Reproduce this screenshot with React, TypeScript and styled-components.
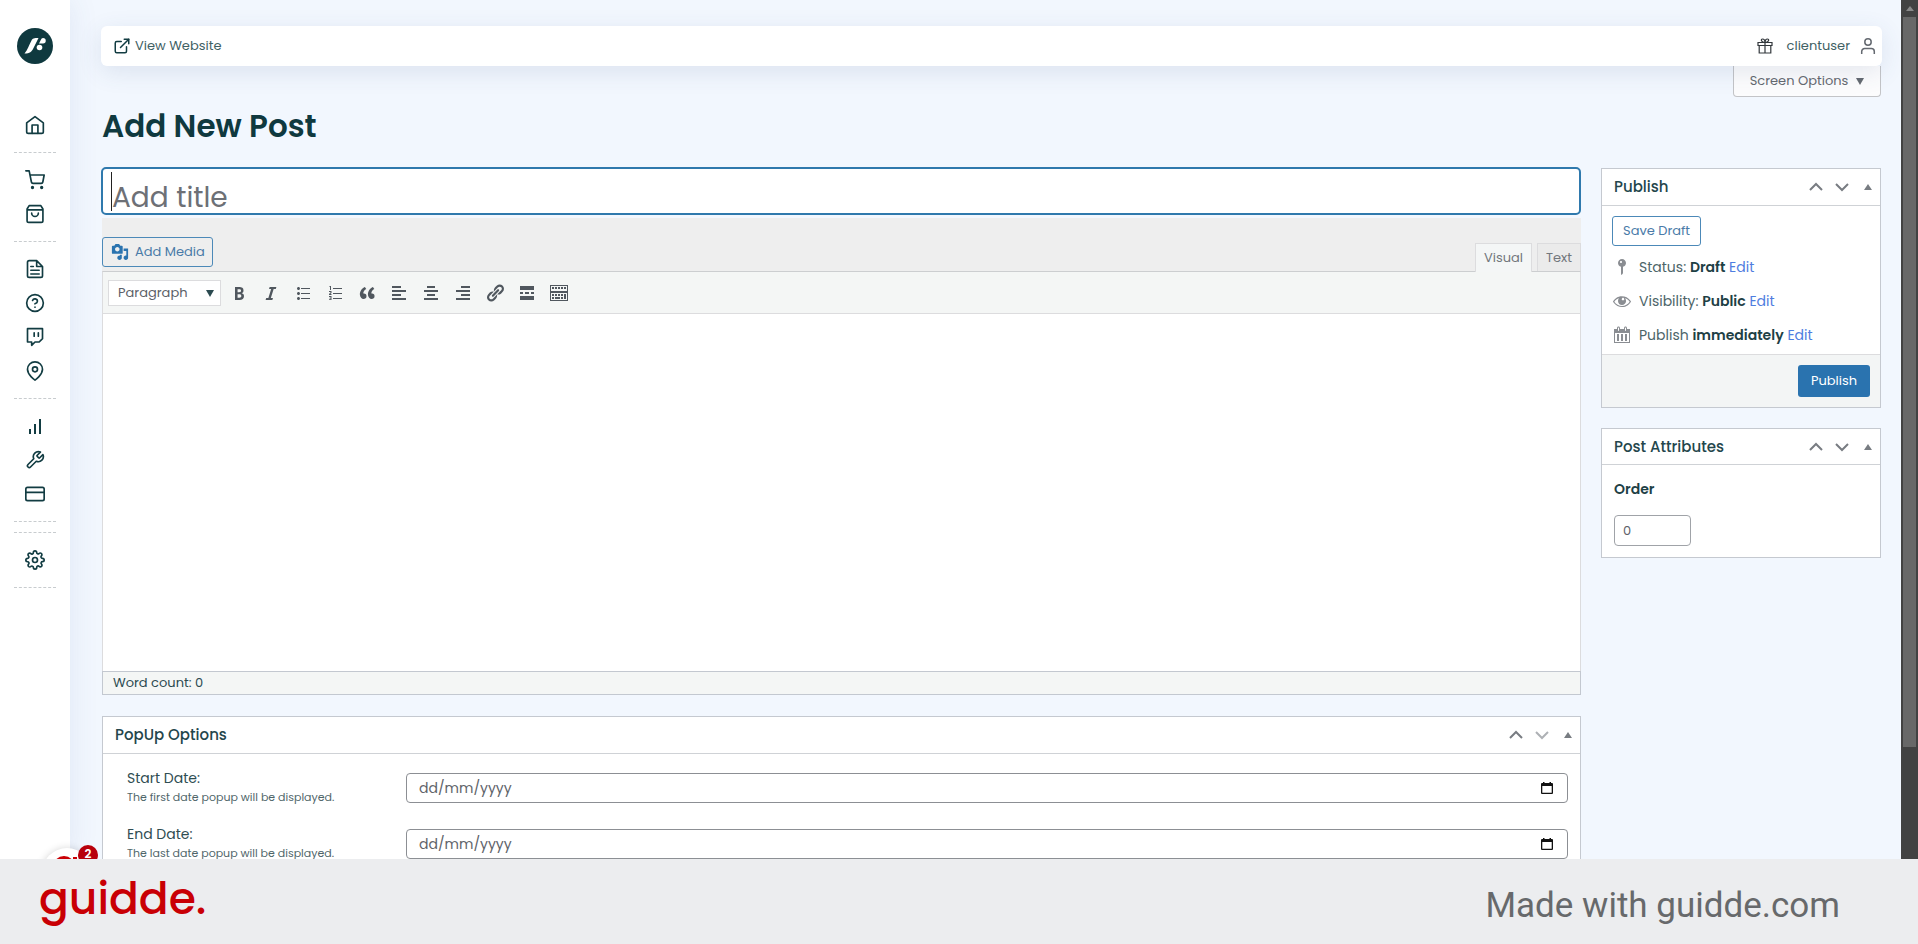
import React from 'react';
import styled, { createGlobalStyle } from 'styled-components';
import {
  FiExternalLink, FiShoppingCart, FiHelpCircle, FiTwitch, FiMapPin, FiCreditCard, FiSettings,
} from 'react-icons/fi';
import { LuWrench } from 'react-icons/lu';

const Global = createGlobalStyle`
  * { box-sizing: border-box; }
  html, body, #root { height: 100%; }
  body {
    margin: 0;
    background: #f2f7fe;
    color: #2b4a50;
    font-family: Poppins, Inter, "Liberation Sans", sans-serif;
    font-size: 13px;
    overflow: hidden;
  }
  button, input, select, textarea { font: inherit; color: inherit; }
  a { text-decoration: none; }
`;

const Shell = styled.div`
  height: 100vh;
  display: flex;
  flex-direction: column;
`;

const Screen = styled.div`
  flex: 1;
  min-height: 0;
  display: flex;
  position: relative;
  overflow: hidden;
`;

const Sidebar = styled.nav`
  flex: none;
  width: 70px;
  background: #fff;
  box-shadow: 0 0 30px rgba(60, 90, 160, 0.1);
  display: flex;
  flex-direction: column;
  align-items: center;
  padding-top: 28px;
  z-index: 1;
`;

const LogoLink = styled.a`
  height: 36px;
  margin-bottom: 34px;
`;

const NavGroup = styled.div<{ $empty?: boolean }>`
  width: 42px;
  display: flex;
  flex-direction: column;
  align-items: center;
  padding: ${(p) => (p.$empty ? '10px 0 0' : '10px 0')};
  border-bottom: 1px dashed #c8cccf;
`;

const NavLink = styled.a`
  height: 34px;
  display: flex;
  align-items: center;
  color: #123c42;
`;

const Main = styled.main`
  flex: 1;
  min-width: 0;
  padding: 26px 19px 0 31px;
`;

const TopBar = styled.header`
  position: relative;
  z-index: 1;
  height: 40px;
  background: #fff;
  border-radius: 6px;
  box-shadow: 0 6px 24px rgba(60, 80, 130, 0.12);
  display: flex;
  align-items: center;
  justify-content: space-between;
  padding: 0 6px 0 12px;
`;

const TopLink = styled.a`
  color: #3f6164;
  display: flex;
  align-items: center;
  gap: 4px;
`;

const UserArea = styled.div`
  display: flex;
  align-items: center;
  gap: 14px;
`;

const UserLink = styled(TopLink)`
  gap: 10px;
`;

const ScreenMeta = styled.div`
  display: flex;
  justify-content: flex-end;
  padding-right: 1px;
  height: 31px;
`;

const ScreenOptions = styled.button`
  width: 148px;
  background: #fcfcfd;
  border: 1px solid #c3c4c7;
  border-top: 0;
  border-radius: 0 0 4px 4px;
  color: #646970;
  display: flex;
  align-items: center;
  justify-content: center;
  gap: 8px;
  padding: 0;
`;

const PageTitle = styled.h1`
  margin: 8px 0 0 1px;
  font-size: 31px;
  line-height: 42px;
  font-weight: 600;
  color: #0f393f;
`;

const Columns = styled.div`
  display: grid;
  grid-template-columns: minmax(0, 1fr) 280px;
  gap: 20px;
  align-items: start;
  padding-right: 1px;
  margin-top: 20px;
`;

const TitleWrap = styled.div`
  position: relative;
`;

const Caret = styled.span`
  position: absolute;
  left: 10px;
  top: 5px;
  width: 1px;
  height: 39px;
  background: #222;
`;

const TitleInput = styled.input`
  display: block;
  width: 100%;
  height: 48px;
  background: #fff;
  border: 2px solid #2f79ad;
  border-radius: 5px;
  padding: 14px 9px 0;
  font-size: 28px;
  line-height: 28px;
  outline: none;
  caret-color: transparent;
  &::placeholder { color: #6d7076; opacity: 1; }
`;

const Editor = styled.section`
  margin: 3px 0 0 1px;
`;

const EditorTools = styled.div`
  height: 53px;
  background: #eee;
  display: flex;
  justify-content: space-between;
  align-items: flex-end;
`;

const OutlineButton = styled.button`
  height: 30px;
  padding: 0 10px;
  background: transparent;
  border: 1px solid #4c89b8;
  border-radius: 3px;
  color: #4a7ba8;
  display: flex;
  align-items: center;
  gap: 6px;
`;

const MediaButton = styled(OutlineButton)`
  padding: 0 7px 0 8px;
  margin-bottom: 4px;
`;

const Tabs = styled.div`
  display: flex;
  align-items: flex-end;
  gap: 5px;
`;

const Tab = styled.button<{ $active?: boolean }>`
  height: ${(p) => (p.$active ? 29 : 28)}px;
  width: ${(p) => (p.$active ? 57 : 44)}px;
  margin-bottom: ${(p) => (p.$active ? -1 : 0)}px;
  padding: 0;
  border: 1px solid #dcdcde;
  border-bottom: 0;
  background: ${(p) => (p.$active ? '#f4f6f6' : '#ebebeb')};
  color: #72777c;
`;

const EditorFrame = styled.div`
  border: 1px solid #dcdcde;
  border-top-color: #ccced0;
  border-bottom: 0;
`;

const Toolbar = styled.div`
  height: 42px;
  background: #f4f6f5;
  border-bottom: 1px solid #dcdcde;
  display: flex;
  align-items: center;
  padding: 0 5px;
`;

const FormatWrap = styled.div`
  position: relative;
  width: 113px;
  margin-right: 2px;
  & > svg { position: absolute; right: 7px; top: 9px; pointer-events: none; }
`;

const FormatSelect = styled.select`
  display: block;
  appearance: none;
  width: 100%;
  height: 26px;
  background: #fff;
  border: 1px solid #dcdcde;
  border-radius: 0;
  padding: 0 9px;
  color: #5c6168;
`;

const ToolButton = styled.button`
  width: 32px;
  height: 30px;
  padding: 0;
  border: 0;
  background: none;
  color: #50575e;
  display: flex;
  align-items: center;
  justify-content: center;
`;

const Writing = styled.textarea`
  display: block;
  width: 100%;
  height: 357px;
  border: 0;
  resize: none;
  outline: none;
  background: #fff;
`;

const StatusBar = styled.div`
  height: 24px;
  border: 1px solid #c3c8d0;
  background: #f4f6f5;
  padding: 0 10px;
  line-height: 22px;
`;

const Panel = styled.section`
  background: #fff;
  border: 1px solid #c5c9d0;
`;

const PopupPanel = styled(Panel)`
  margin: 21px 0 0 1px;
`;

const PanelHead = styled.header<{ $tall?: boolean }>`
  height: ${(p) => (p.$tall ? 37 : 36)}px;
  border-bottom: 1px solid #cfd2d6;
  display: flex;
  align-items: center;
  justify-content: space-between;
  padding: 0 4px 0 12px;
`;

const PanelTitle = styled.h2`
  margin: 0;
  font-size: 15px;
  line-height: 20px;
  font-weight: 500;
  color: #24464c;
`;

const PanelActions = styled.div`
  display: flex;
`;

const PanelAction = styled.button<{ $dim?: boolean }>`
  width: 26px;
  height: 30px;
  padding: 0;
  border: 0;
  background: none;
  color: ${(p) => (p.$dim ? '#aeb1b5' : '#787c82')};
  display: flex;
  align-items: center;
  justify-content: center;
  &:last-child { width: 16px; margin-left: 5px; }
`;

const FieldList = styled.div`
  padding-top: 15px;
`;

const FieldRow = styled.div`
  display: grid;
  grid-template-columns: 279px minmax(0, 1fr);
  height: 56px;
  padding: 0 12px 0 24px;
`;

const FieldText = styled.label`
  display: flex;
  flex-direction: column;
  line-height: 19px;
  color: #2f4d52;
  font-size: 14px;
  small { font-size: 11px; line-height: 18px; color: #50666a; }
`;

const DateBox = styled.div`
  position: relative;
  height: 30px;
  margin-top: 4px;
  & > svg { position: absolute; right: 15px; top: 9px; pointer-events: none; }
`;

const DateInput = styled.input`
  display: block;
  width: 100%;
  height: 30px;
  border: 1px solid #8c8f94;
  border-radius: 4px;
  padding: 0 12px;
  font-size: 14px;
  background: #fff;
  &::placeholder { color: #5f646a; opacity: 1; }
`;

const SideColumn = styled.aside`
  padding-top: 1px;
  display: grid;
  gap: 20px;
`;

const PublishBody = styled.div`
  padding: 10px;
  height: 148px;
`;

const InfoList = styled.div`
  padding-top: 4px;
`;

const InfoRow = styled.div`
  height: 34px;
  display: flex;
  align-items: center;
  gap: 7px;
  color: #4d6569;
  font-size: 14px;
  & > svg { flex: none; }
  b { font-weight: 600; color: #1e4045; }
  a { color: #4f7de0; }
`;

const PublishFoot = styled.footer`
  height: 53px;
  background: #f3f5f5;
  border-top: 1px solid #dcdcde;
  display: flex;
  justify-content: flex-end;
  align-items: center;
  padding-right: 10px;
`;

const PrimaryButton = styled.button`
  width: 72px;
  height: 32px;
  padding: 0;
  border: 0;
  border-radius: 3px;
  background: #2a73af;
  color: #fff;
`;

const OrderBody = styled.div`
  padding: 11px 12px;
  display: flex;
  flex-direction: column;
`;

const OrderLabel = styled.label`
  font-size: 14px;
  font-weight: 600;
  line-height: 26px;
  color: #1e4045;
`;

const OrderInput = styled.input`
  margin-top: 13px;
  width: 77px;
  height: 31px;
  border: 1px solid #a0a3a8;
  border-radius: 4px;
  padding: 0 8px;
  color: #5c6168;
`;

const ScrollRail = styled.div`
  flex: none;
  width: 17px;
  background: #424242;
  display: flex;
  flex-direction: column;
  padding: 0 2px;
`;

const RailArrow = styled.div`
  height: 17px;
  display: flex;
  align-items: center;
  justify-content: center;
`;

const RailThumb = styled.div`
  height: 85%;
  background: #686868;
`;

const HelpBubble = styled.div`
  position: absolute;
  left: 42px;
  top: 848px;
  width: 50px;
  height: 50px;
  border-radius: 50%;
  background: #fff;
  box-shadow: 0 1px 8px rgba(0, 0, 0, 0.2);
  z-index: 2;
  & > svg { position: absolute; left: 9px; top: 7px; }
`;

const BubbleBadge = styled.span`
  position: absolute;
  left: 36px;
  top: -3px;
  width: 20px;
  height: 20px;
  border-radius: 50%;
  background: #b8000c;
  color: #fff;
  font-size: 12px;
  font-weight: 600;
  line-height: 18px;
  text-align: center;
`;

const Footer = styled.footer`
  flex: none;
  height: 85px;
  background: #ecedef;
  display: flex;
  justify-content: space-between;
  align-items: center;
  padding: 0 78px 0 39px;
  position: relative;
  z-index: 3;
`;

const Brand = styled.span`
  font-size: 44px;
  line-height: 48px;
  font-weight: 500;
  color: #c90005;
  margin-bottom: 6px;
`;

const MadeWith = styled.span`
  font-family: Roboto, sans-serif;
  font-size: 35px;
  line-height: 42px;
  color: #67696b;
  margin-top: 9px;
`;

const stroke = { fill: 'none', stroke: 'currentColor', strokeWidth: 2, strokeLinecap: 'round', strokeLinejoin: 'round' } as const;

const Logo = () => (
  <svg width="36" height="36" viewBox="0 0 36 36" aria-hidden="true">
    <circle cx="18" cy="18" r="18" fill="#0f393f" />
    <path d="M7.500 25.500C10.500 22 12 17 14.500 12.500C15.500 10.500 17 10 21.500 10L16.500 20C14.500 24 13 25.500 7.500 25.500Z" fill="#fff" />
    <path d="M22 15.500L23.500 12.500C24.300 10.800 25 10 26 10A2.700 2.700 0 0 1 26 15.500Z" fill="#fff" />
    <circle cx="22.500" cy="19.500" r="2.800" fill="#fff" />
  </svg>
);

const HomeIcon = () => (
  <svg width="20" height="20" viewBox="0 0 24 24" {...stroke}>
    <path d="M2 9.500 12 2l10 7.500V20a2 2 0 0 1-2 2H4a2 2 0 0 1-2-2z" />
    <path d="M8.500 22v-10h7v10" />
  </svg>
);

const BagIcon = () => (
  <svg width="20" height="20" viewBox="0 0 24 24" {...stroke}>
    <path d="M5 2 2.500 6v14a2 2 0 0 0 2 2h15a2 2 0 0 0 2-2V6L19 2zM2.500 7h19M16 11a4 4 0 0 1-8 0" />
  </svg>
);

const DocIcon = () => (
  <svg width="20" height="20" viewBox="0 0 24 24" {...stroke}>
    <path d="M14 2H5a2 2 0 0 0-2 2v16a2 2 0 0 0 2 2h14a2 2 0 0 0 2-2V9zM14 2v7h7M7 9h3M7 13.500h10M7 18h10" />
  </svg>
);

const BarsIcon = () => (
  <svg width="18" height="18" viewBox="0 0 18 18" {...stroke} strokeLinecap="butt">
    <path d="M4 17v-5M9 17V7M14 17V2" />
  </svg>
);

const GiftIcon = () => (
  <svg width="16" height="16" viewBox="0 0 16 16" fill="none" stroke="#33383c" strokeWidth="1.200">
    <path d="M1 4.500h14v3H1zM2.200 7.500h11.600v7.500H2.200zM8 4.500V15M8 4.500C4 4.500 3.500 1 5.500 1S8 3 8 4.500C8 3 8.500 1 10.500 1S12 4.500 8 4.500" />
  </svg>
);

const PersonIcon = () => (
  <svg width="16" height="18" viewBox="0 0 16 18" fill="none" stroke="#646970" strokeWidth="1.500">
    <circle cx="8" cy="5" r="3.200" />
    <path d="M1.700 17v-2.500a3 3 0 0 1 3-3h6.600a3 3 0 0 1 3 3V17" />
  </svg>
);

const Triangle = ({ up = false }: { up?: boolean }) => (
  <svg width="8" height="8" viewBox="0 0 8 8" fill="currentColor">
    <path d={up ? 'M4 1 8 7H0z' : 'M0 1h8L4 8z'} />
  </svg>
);

const MediaIcon = () => (
  <svg width="18" height="18" viewBox="0 0 20 20" fill="#2a73af">
    <path d="M13 11V4c0-.55-.45-1-1-1h-1.670L9 1H5L3.670 3H2c-.55 0-1 .45-1 1v7c0 .55.45 1 1 1h10c.55 0 1-.45 1-1zM7 4.500c1.380 0 2.500 1.120 2.500 2.500S8.380 9.500 7 9.500 4.500 8.380 4.500 7 5.620 4.500 7 4.500zM14 6h5v10.500c0 1.380-1.120 2.500-2.500 2.500S14 17.880 14 16.500s1.120-2.500 2.500-2.500c.17 0 .34.020.5.050V9h-3V6zm-4 8.050V13h2v3.500c0 1.380-1.120 2.500-2.500 2.500S7 17.880 7 16.500 8.120 14 9.500 14c.17 0 .34.020.5.050z" />
  </svg>
);

const toolIcons: { label: string; d: string; evenOdd?: boolean }[] = [
  { label: 'Bold', d: 'M6 4v13h4.540c1.370 0 2.460-.330 3.260-1 .8-.660 1.200-1.580 1.200-2.770 0-.840-.170-1.510-.510-2.010s-.9-.850-1.670-1.030v-.090c.570-.1.990-.390 1.260-.860S14.500 8.300 14.500 7.400c0-1.220-.38-2.120-1.130-2.690C12.600 4.240 11.400 4 9.700 4H6zm2.570 5.150V6.260h1.360c.73 0 1.270.11 1.610.32.34.22.51.58.51 1.070 0 .54-.16.92-.47 1.150s-.82.35-1.510.35H8.570zm0 2.190h1.600c1.440 0 2.160.53 2.160 1.610 0 .6-.17 1.050-.51 1.340s-.86.43-1.570.43H8.570z', evenOdd: true },
  { label: 'Italic', d: 'M14.780 6h-2.130l-2.800 9h2.120l-.620 2H4.600l.620-2h2.140l2.800-9H8.030l.620-2h6.750z' },
  { label: 'Bulleted list', d: 'M5.500 7C4.670 7 4 6.330 4 5.500 4 4.680 4.670 4 5.500 4 6.320 4 7 4.680 7 5.500 7 6.330 6.320 7 5.500 7zM8 5h9v1H8V5zm-2.500 7c-.83 0-1.500-.67-1.500-1.500C4 9.680 4.670 9 5.500 9c.82 0 1.500.68 1.500 1.500 0 .83-.68 1.500-1.500 1.500zM8 10h9v1H8v-1zm-2.500 7c-.83 0-1.500-.67-1.500-1.500 0-.82.67-1.500 1.500-1.500.82 0 1.500.68 1.500 1.500 0 .83-.68 1.500-1.500 1.500zM8 15h9v1H8v-1z' },
  { label: 'Numbered list', d: 'M5 3h1v4H5V4H4zM8 5h9v1H8zM4 8h2.500v2L5.300 11h1.200v1H4v-1l1.500-1.500V9H4zM8 10h9v1H8zM4 13h2.500v4H4v-.8h1.600v-.8H4.500v-.7h1.100v-.8H4zM8 15h9v1H8z' },
  { label: 'Blockquote', d: 'M9.490 13.220c0-.74-.2-1.380-.61-1.900-.62-.78-1.830-.88-2.530-.72-.29-1.650 1.110-3.750 2.920-4.650L7.880 4c-2.730 1.300-5.420 4.280-4.960 8.050C3.210 14.430 4.590 16 6.540 16c.85 0 1.560-.25 2.120-.75s.83-1.180.83-2.030zm8.050 0c0-.74-.2-1.380-.61-1.900-.63-.78-1.830-.88-2.530-.72-.29-1.650 1.110-3.750 2.920-4.650L15.930 4c-2.730 1.300-5.410 4.280-4.950 8.050.29 2.380 1.660 3.950 3.610 3.950.85 0 1.560-.25 2.120-.75s.83-1.180.83-2.030z' },
  { label: 'Align left', d: 'M12 5V3H3v2h9zm5 4V7H3v2h14zm-5 4v-2H3v2h9zm5 4v-2H3v2h14z' },
  { label: 'Align center', d: 'M14 5V3H6v2h8zm3 4V7H3v2h14zm-3 4v-2H6v2h8zm3 4v-2H3v2h14z' },
  { label: 'Align right', d: 'M17 5V3H8v2h9zm0 4V7H3v2h14zm0 4v-2H8v2h9zm0 4v-2H3v2h14z' },
  { label: 'Insert link', d: 'M17.740 2.760c1.680 1.690 1.680 4.410 0 6.100l-1.530 1.520c-1.120 1.120-2.700 1.470-4.140 1.090l2.620-2.610.76-.77.76-.76c.84-.84.84-2.200 0-3.040-.84-.85-2.200-.85-3.040 0l-.77.76-3.380 3.380c-.37-1.440-.02-3.020 1.100-4.140l1.520-1.530c1.690-1.680 4.420-1.680 6.100 0zM8.590 13.430l5.340-5.340c.42-.42.42-1.100 0-1.520-.44-.43-1.130-.39-1.530 0l-5.330 5.340c-.42.42-.42 1.100 0 1.520.44.43 1.130.39 1.520 0zm-.76 2.290l4.140-4.150c.38 1.440.03 3.020-1.090 4.140l-1.520 1.530c-1.690 1.680-4.410 1.680-6.100 0-1.680-1.680-1.680-4.420 0-6.100l1.530-1.520c1.120-1.120 2.700-1.470 4.140-1.100l-4.140 4.150c-.85.84-.85 2.200 0 3.050.84.84 2.200.84 3.040 0z' },
  { label: 'Read more', d: 'M17 7V3H3v4h14zM6 11V9H3v2h3zm6 0V9H8v2h4zm5 0V9h-3v2h3zm0 6v-4H3v4h14z' },
  { label: 'Toolbar toggle', evenOdd: true, d: 'M1 2h18v7H1zM2 3v5h16V3zM1 9h18v9H1zM2 10v7h16v-7zM3 4h2v2H3zM6 4h2v2H6zM9 4h2v2H9zM12 4h2v2h-2zM15 4h2v2h-2zM3 11h2v2H3zM6 11h2v2H6zM9 11h2v2H9zM12 11h2v2h-2zM15 11h2v5h-2zM3 14h2v2H3zM6 14h5v2H6zM12 14h2v2h-2z' },
];

const PinIcon = () => (
  <svg width="20" height="20" viewBox="0 0 20 20" fill="#8a8d92">
    <path fillRule="evenodd" d="M14 6c0 1.860-1.280 3.410-3 3.860V16c0 1-2 2-2 2V9.860c-1.720-.45-3-2-3-3.860 0-2.210 1.790-4 4-4s4 1.790 4 4zM8 5c0 .55.450 1 1 1s1-.45 1-1-.45-1-1-1-1 .45-1 1z" />
  </svg>
);

const EyeIcon = () => (
  <svg width="20" height="20" viewBox="0 0 20 20" fill="#8a8d92">
    <path d="M18.300 9.500C15 4.900 8.500 3.800 3.900 7.200c-1.200.9-2.200 2.100-3 3.400.2.400.5.800.8 1.200 3.300 4.600 9.600 5.600 14.200 2.400.9-.7 1.700-1.400 2.400-2.400.3-.4.5-.8.8-1.200-.3-.4-.5-.8-.8-1.100zm-8.200-2.300c.5-.5 1.300-.5 1.800 0s.5 1.300 0 1.800-1.300.5-1.800 0-.5-1.300 0-1.800zm-.1 7.700c-3.100 0-6-1.600-7.700-4.200C3.500 9 5.100 7.800 7 7.200c-.7.8-1 1.700-1 2.700 0 2.200 1.700 4.100 4 4.100 2.200 0 4.100-1.700 4.100-4v-.1c0-1-.4-2-1.100-2.700 1.900.6 3.500 1.800 4.700 3.500-1.700 2.600-4.600 4.200-7.700 4.200z" />
  </svg>
);

const CalendarIcon = () => (
  <svg width="20" height="20" viewBox="0 0 20 20" fill="#8a8d92">
    <path fillRule="evenodd" d="M15 4h3v14H2V4h3V3c0-.83.67-1.500 1.500-1.500S8 2.170 8 3v1h4V3c0-.83.67-1.500 1.500-1.500S15 2.170 15 3v1zM6 3v2.500c0 .28.22.5.5.5s.5-.22.5-.5V3c0-.28-.22-.5-.5-.5S6 2.720 6 3zm7 0v2.500c0 .28.22.5.5.5s.5-.22.5-.5V3c0-.28-.22-.5-.5-.5s-.5.22-.5.5zm4 14V8H3v9h14zM7 16V9H5v7h2zm4 0V9H9v7h2zm4 0V9h-2v7h2z" />
  </svg>
);

const DateGlyph = () => (
  <svg width="12" height="12" viewBox="0 0 12 12" fill="#111">
    <path fillRule="evenodd" d="M2 0h1.500v1h5V0H10v1h1a1 1 0 0 1 1 1v9a1 1 0 0 1-1 1H1a1 1 0 0 1-1-1V2a1 1 0 0 1 1-1h1zM1.300 4v6.700h9.400V4z" />
  </svg>
);

const Chevron = ({ down = false }: { down?: boolean }) => (
  <svg width="14" height="14" viewBox="0 0 14 14" fill="none" stroke="currentColor" strokeWidth="2">
    <path d={down ? 'M1 4l6 6 6-6' : 'M1 10l6-6 6 6'} />
  </svg>
);

const PanelHeader = ({ title, dimDown, tall }: { title: string; dimDown?: boolean; tall?: boolean }) => (
  <PanelHead $tall={tall}>
    <PanelTitle>{title}</PanelTitle>
    <PanelActions>
      <PanelAction aria-label={`Move ${title} up`}><Chevron /></PanelAction>
      <PanelAction aria-label={`Move ${title} down`} $dim={dimDown}><Chevron down /></PanelAction>
      <PanelAction aria-label={`Toggle ${title}`}><Triangle up /></PanelAction>
    </PanelActions>
  </PanelHead>
);

const navGroups: { label: string; icon: React.ReactNode }[][] = [
  [{ label: 'Home', icon: <HomeIcon /> }],
  [{ label: 'Orders', icon: <FiShoppingCart size={20} /> }, { label: 'Products', icon: <BagIcon /> }],
  [
    { label: 'Pages', icon: <DocIcon /> },
    { label: 'Help', icon: <FiHelpCircle size={20} /> },
    { label: 'Popups', icon: <FiTwitch size={20} /> },
    { label: 'Locations', icon: <FiMapPin size={20} /> },
  ],
  [
    { label: 'Reports', icon: <BarsIcon /> },
    { label: 'Tools', icon: <LuWrench size={20} /> },
    { label: 'Payments', icon: <FiCreditCard size={20} /> },
  ],
  [],
  [{ label: 'Settings', icon: <FiSettings size={20} /> }],
];

const dateFields = [
  { id: 'start-date', label: 'Start Date:', hint: 'The first date popup will be displayed.' },
  { id: 'end-date', label: 'End Date:', hint: 'The last date popup will be displayed.' },
];

const infoRows = [
  { icon: <PinIcon />, label: 'Status:', value: 'Draft' },
  { icon: <EyeIcon />, label: 'Visibility:', value: 'Public' },
  { icon: <CalendarIcon />, label: 'Publish', value: 'immediately' },
];

export default function App() {
  return (
    <Shell>
      <Global />
      <Screen>
        <Sidebar>
          <LogoLink href="#" aria-label="Dashboard"><Logo /></LogoLink>
          {navGroups.map((group, i) => (
            <NavGroup key={i} $empty={group.length === 0}>
              {group.map((item) => (
                <NavLink key={item.label} href="#" aria-label={item.label}>{item.icon}</NavLink>
              ))}
            </NavGroup>
          ))}
        </Sidebar>

        <Main>
          <TopBar>
            <TopLink href="#"><FiExternalLink size={18} color="#123c42" />View Website</TopLink>
            <UserArea>
              <GiftIcon />
              <UserLink href="#">clientuser<PersonIcon /></UserLink>
            </UserArea>
          </TopBar>
          <ScreenMeta>
            <ScreenOptions>Screen Options <Triangle /></ScreenOptions>
          </ScreenMeta>
          <PageTitle>Add New Post</PageTitle>

          <Columns>
            <div>
              <TitleWrap>
                <TitleInput aria-label="Add title" placeholder="Add title" />
                <Caret />
              </TitleWrap>
              <Editor>
                <EditorTools>
                  <MediaButton><MediaIcon />Add Media</MediaButton>
                  <Tabs>
                    <Tab $active>Visual</Tab>
                    <Tab>Text</Tab>
                  </Tabs>
                </EditorTools>
                <EditorFrame>
                  <Toolbar>
                    <FormatWrap>
                      <FormatSelect aria-label="Format"><option>Paragraph</option></FormatSelect>
                      <Triangle />
                    </FormatWrap>
                    {toolIcons.map((tool) => (
                      <ToolButton key={tool.label} aria-label={tool.label}>
                        <svg width="20" height="20" viewBox="0 0 20 20" fill="currentColor">
                          <path d={tool.d} fillRule={tool.evenOdd ? 'evenodd' : 'nonzero'} />
                        </svg>
                      </ToolButton>
                    ))}
                  </Toolbar>
                  <Writing aria-label="Post content" />
                </EditorFrame>
                <StatusBar>Word count: 0</StatusBar>
              </Editor>

              <PopupPanel>
                <PanelHeader title="PopUp Options" dimDown tall />
                <FieldList>
                  {dateFields.map((f) => (
                    <FieldRow key={f.id}>
                      <FieldText htmlFor={f.id}>{f.label}<small>{f.hint}</small></FieldText>
                      <DateBox>
                        <DateInput id={f.id} placeholder="dd/mm/yyyy" />
                        <DateGlyph />
                      </DateBox>
                    </FieldRow>
                  ))}
                </FieldList>
              </PopupPanel>
            </div>

            <SideColumn>
              <Panel>
                <PanelHeader title="Publish" tall />
                <PublishBody>
                  <OutlineButton>Save Draft</OutlineButton>
                  <InfoList>
                    {infoRows.map((row) => (
                      <InfoRow key={row.label}>
                        {row.icon}
                        <span>{row.label} <b>{row.value}</b> <a href="#">Edit</a></span>
                      </InfoRow>
                    ))}
                  </InfoList>
                </PublishBody>
                <PublishFoot><PrimaryButton>Publish</PrimaryButton></PublishFoot>
              </Panel>
              <Panel>
                <PanelHeader title="Post Attributes" />
                <OrderBody>
                  <OrderLabel htmlFor="order">Order</OrderLabel>
                  <OrderInput id="order" defaultValue="0" />
                </OrderBody>
              </Panel>
            </SideColumn>
          </Columns>
        </Main>

        <ScrollRail>
          <RailArrow><svg width="8" height="5" viewBox="0 0 8 5" fill="#8a8a8a"><path d="M4 0l4 5H0z" /></svg></RailArrow>
          <RailThumb />
        </ScrollRail>

        <HelpBubble>
          <svg width="28" height="28" viewBox="0 0 28 28" fill="none" stroke="#c90005" strokeWidth="4">
            <circle cx="13" cy="12" r="9" />
            <path d="M24 2v16" />
          </svg>
          <BubbleBadge>2</BubbleBadge>
        </HelpBubble>
      </Screen>
      <Footer>
        <Brand>guidde.</Brand>
        <MadeWith>Made with guidde.com</MadeWith>
      </Footer>
    </Shell>
  );
}
